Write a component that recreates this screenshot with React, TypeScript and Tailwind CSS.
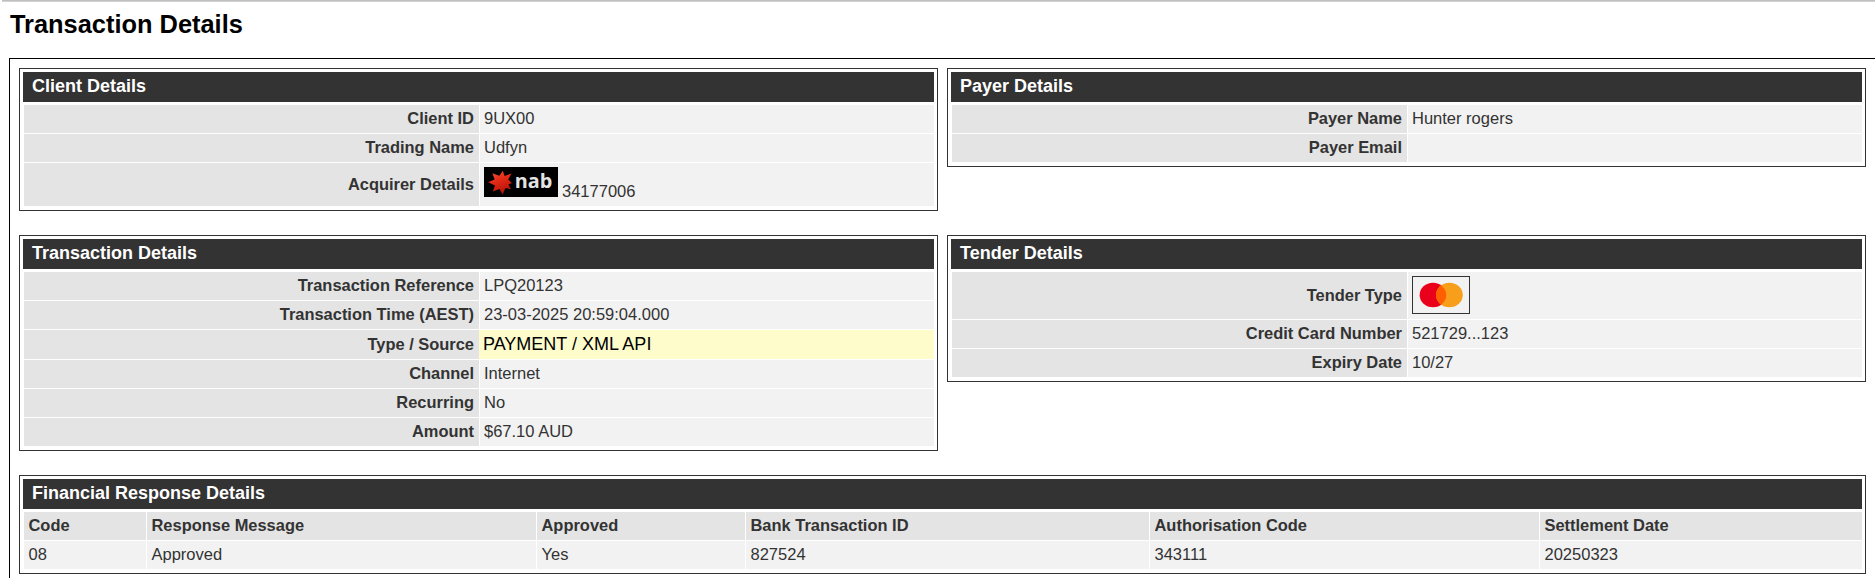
import { ReactNode } from "react";
import clsx from "clsx";

type DetailRow = {
  label: string;
  value: ReactNode;
  height?: string;
  highlight?: boolean;
};

const NabLogo = () => (
  <svg width="74" height="30" viewBox="0 0 74 30" className="mt-1 shrink-0">
    <defs>
      <linearGradient id="star" x1="0" y1="0" x2="0.4" y2="1">
        <stop offset="0" stopColor="#f2553c" />
        <stop offset="0.5" stopColor="#e32a16" />
        <stop offset="1" stopColor="#b8140a" />
      </linearGradient>
    </defs>
    <rect width="74" height="30" fill="#000" />
    <path
      d="M18.8 3.8L20.6 9L27.4 6.6L24.2 12.6L28 16L24.4 17.6L27 22.2L21.4 21L18.6 27.4L15.6 22L8.8 24.6L11 18.4L4.2 15.2L10.6 12.4L8.4 6.2L15.4 8.8Z"
      fill="url(#star)"
    />
    <text x="30.8" y="20.5" fill="#e4e4e4" fontSize="19" fontWeight="700" fontFamily="'Open Sans', sans-serif" textLength="37.5" lengthAdjust="spacingAndGlyphs">
      nab
    </text>
  </svg>
);

const MastercardLogo = () => (
  <div className="mb-0.5 flex h-[38px] w-[58px] items-center justify-center border border-[#333]">
    <svg width="44" height="26" viewBox="0 0 44 26">
      <ellipse cx="14" cy="13" rx="13.4" ry="12.2" fill="#eb001b" />
      <ellipse cx="30.4" cy="13" rx="13.4" ry="12.2" fill="#f79e1b" />
      <path d="M22.2 3.4A13.4 12.2 0 0 1 22.2 22.6A13.4 12.2 0 0 1 22.2 3.4Z" fill="#ff5f00" />
    </svg>
  </div>
);

const clientRows: DetailRow[] = [
  { label: "Client ID", value: "9UX00" },
  { label: "Trading Name", value: "Udfyn" },
  {
    label: "Acquirer Details",
    height: "h-[43px]",
    value: (
      <div className="flex h-full items-start gap-1">
        <NabLogo />
        <span className="mt-4 leading-6">34177006</span>
      </div>
    ),
  },
];

const payerRows: DetailRow[] = [
  { label: "Payer Name", value: "Hunter rogers" },
  { label: "Payer Email", value: "" },
];

const transactionRows: DetailRow[] = [
  { label: "Transaction Reference", value: "LPQ20123" },
  { label: "Transaction Time (AEST)", value: "23-03-2025 20:59:04.000" },
  { label: "Type / Source", value: "PAYMENT / XML API", height: "h-[29px]", highlight: true },
  { label: "Channel", value: "Internet" },
  { label: "Recurring", value: "No" },
  { label: "Amount", value: "$67.10 AUD" },
];

const tenderRows: DetailRow[] = [
  { label: "Tender Type", value: <MastercardLogo />, height: "h-[47px]" },
  { label: "Credit Card Number", value: "521729...123" },
  { label: "Expiry Date", value: "10/27" },
];

const responseColumns = [
  { title: "Code", value: "08" },
  { title: "Response Message", value: "Approved" },
  { title: "Approved", value: "Yes" },
  { title: "Bank Transaction ID", value: "827524" },
  { title: "Authorisation Code", value: "343111" },
  { title: "Settlement Date", value: "20250323" },
];

const Panel = ({ title, children }: { title: string; children: ReactNode }) => (
  <section className="border border-[#333] p-[3px] pb-1">
    <h2 className="mb-[3px] h-[30px] bg-[#333] pl-[9px] text-lg leading-[28px] font-bold text-white">{title}</h2>
    <div className="pl-px">{children}</div>
  </section>
);

const DetailTable = ({ rows }: { rows: DetailRow[] }) => (
  <div className="flex flex-col gap-px">
    {rows.map(({ label, value, height, highlight }) => (
      <div key={label} className={clsx("grid grid-cols-[455px_454px] gap-px", height ?? "h-7")}>
        <div
          className={clsx(
            "flex items-center justify-end bg-[#e4e4e4] pr-[5px] text-[16.45px] font-bold",
            !height && "pb-0.5",
          )}
        >
          {label}
        </div>
        <div
          className={clsx(
            "flex items-center pl-1",
            !height && "pb-0.5",
            highlight ? "-ml-px bg-[#fffccc] pb-px text-lg leading-6 text-black" : "bg-[#f2f2f2]",
          )}
        >
          {value}
        </div>
      </div>
    ))}
  </div>
);

const ResponseTable = () => (
  <div className="grid grid-cols-[122px_389px_208px_403px_389px_322px] gap-px">
    {responseColumns.map(({ title }) => (
      <div key={title} className="flex h-7 items-center bg-[#e4e4e4] pb-0.5 pl-[4.5px] text-[16.45px] font-bold">
        {title}
      </div>
    ))}
    {responseColumns.map(({ title, value }) => (
      <div key={title} className="flex h-7 items-center bg-[#f2f2f2] pb-0.5 pl-[4.5px]">
        {value}
      </div>
    ))}
  </div>
);

export default function App() {
  return (
    <main className="h-[578px] w-[1875px] overflow-hidden bg-white font-['Liberation_Sans',Arial,sans-serif] text-[16.5px] text-[#333]">
      <div className="ml-0.5 h-0.5 border-t border-b border-t-[#bfbfbf] border-b-[#d3d3d3]" />
      <h1 className="ml-2.5 h-14 pt-1.5 text-[25.4px] leading-[32px] font-bold text-black">Transaction Details</h1>
      <div className="ml-[9px] h-[520px] border-t border-l border-black pt-[9px] pl-[9px]">
        <div className="grid grid-cols-[919px_919px] items-start gap-x-[9px] gap-y-6">
          <Panel title="Client Details">
            <DetailTable rows={clientRows} />
          </Panel>
          <Panel title="Payer Details">
            <DetailTable rows={payerRows} />
          </Panel>
          <Panel title="Transaction Details">
            <DetailTable rows={transactionRows} />
          </Panel>
          <Panel title="Tender Details">
            <DetailTable rows={tenderRows} />
          </Panel>
          <div className="col-span-2">
            <Panel title="Financial Response Details">
              <ResponseTable />
            </Panel>
          </div>
        </div>
      </div>
    </main>
  );
}
